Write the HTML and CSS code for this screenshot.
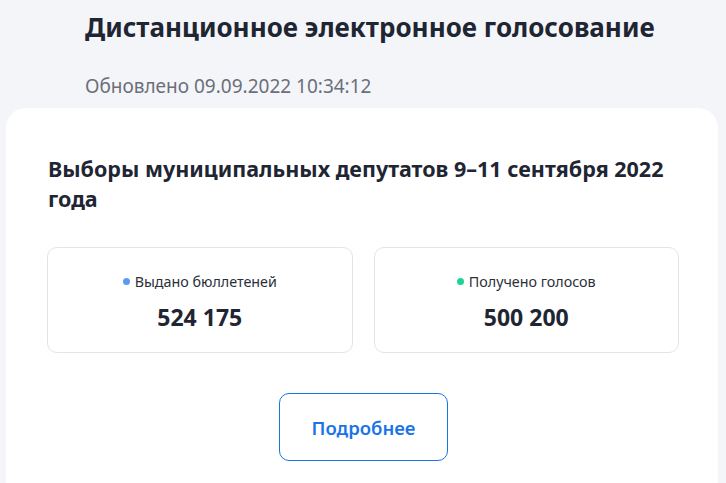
FILE: index.html
```html
<!DOCTYPE html>
<html lang="ru">
<head>
<meta charset="utf-8">
<link rel="stylesheet" href="styles.css">
</head>
<body>
<header class="top">
  <h1 class="title">Дистанционное электронное голосование</h1>
  <p class="updated">Обновлено 09.09.2022 10:34:12</p>
</header>
<main class="card">
  <h2 class="card-title">Выборы муниципальных депутатов 9–11 сентября 2022 года</h2>
  <div class="stats">
    <div class="stat">
      <div class="stat-label"><span class="dot dot-blue"></span>Выдано бюллетеней</div>
      <div class="stat-value">524 175</div>
    </div>
    <div class="stat">
      <div class="stat-label"><span class="dot dot-green"></span>Получено голосов</div>
      <div class="stat-value">500 200</div>
    </div>
  </div>
  <div class="actions">
    <a class="more" href="#">Подробнее</a>
  </div>
</main>
</body>
</html>
```
FILE: styles.css
```css
* { box-sizing: border-box; }
html, body { margin: 0; padding: 0; }
body {
  background: #f4f5f8;
  font-family: "Noto Sans", "Open Sans", sans-serif;
  color: #1f2633;
  height: 483px;
  overflow: hidden;
}
.top {
  padding: 8px 0 0 85px;
}
.title {
  margin: 0;
  font-size: 26px;
  font-weight: 700;
  line-height: 38px;
  color: #1f2633;
}
.updated {
  margin: 28px 0 0;
  font-size: 19px;
  line-height: 24px;
  color: #6b6f7a;
}
.card {
  margin: 10px 8px 0 6px;
  background: #fff;
  border-radius: 20px 20px 0 0;
  padding: 46px 39px 20px 42px;
  height: 375px;
}
.card-title {
  margin: 0;
  font-size: 21.5px;
  line-height: 30px;
  font-weight: 700;
  color: #1f2633;
}
.stats {
  margin-top: 33px;
  display: grid;
  grid-template-columns: 1fr 1fr;
  gap: 21px;
  margin-left: -1px;
}
.stat {
  height: 106px;
  padding-top: 3px;
  border: 1px solid #e1e4ea;
  border-radius: 10px;
  display: flex;
  flex-direction: column;
  align-items: center;
  justify-content: center;
  gap: 12px;
}
.stat-label {
  font-size: 14.3px;
  line-height: 18px;
  color: #2a2f3a;
  display: flex;
  align-items: center;
  gap: 5px;
}
.dot {
  width: 7px;
  height: 7px;
  border-radius: 50%;
  display: inline-block;
}
.dot-blue { background: #5b9cf0; }
.dot-green { background: #1ed39a; }
.stat-value {
  font-size: 23px;
  line-height: 28px;
  font-weight: 700;
  color: #1f2633;
}
.actions {
  margin-top: 40px;
  display: flex;
  justify-content: center;
}
.more {
  display: flex;
  align-items: center;
  justify-content: center;
  width: 169px;
  height: 68px;
  border: 1px solid #1a73e8;
  border-radius: 10px;
  color: #1a73e8;
  font-size: 18.5px;
  font-weight: 600;
  text-decoration: none;
}
```
